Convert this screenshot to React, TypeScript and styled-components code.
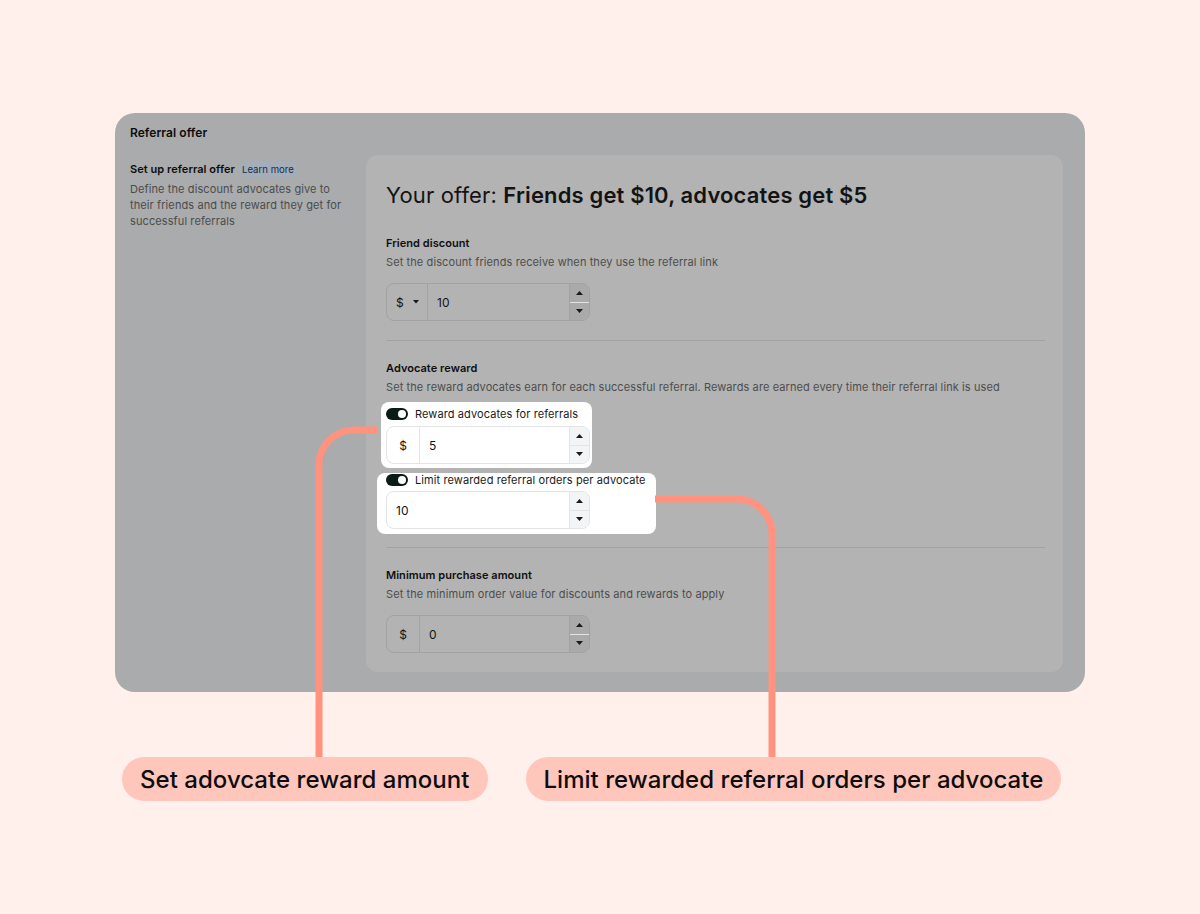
import React from "react"
import styled, { createGlobalStyle } from "styled-components"

const GlobalStyle = createGlobalStyle`
  html, body {
    margin: 0;
    padding: 0;
    background: #fff0ec;
    font-family: Inter, "Noto Sans", sans-serif;
    -webkit-font-smoothing: antialiased;
  }
`

type Tone = "dim" | "light"

const SpinArrow: React.FC<{ dir: "up" | "down" }> = ({ dir }) => (
  <svg width="7" height="4" viewBox="0 0 7 4">
    {dir === "up" ? <path d="M0 4 L3.5 0 L7 4 Z" fill="#1a1a1a" /> : <path d="M0 0 L3.5 4 L7 0 Z" fill="#1a1a1a" />}
  </svg>
)

const NumberInput: React.FC<{ tone: Tone; prefix?: string; caret?: boolean; value: string }> = ({
  tone,
  prefix,
  caret,
  value,
}) => (
  <InputGroup $tone={tone}>
    {prefix && (
      <Prefix $tone={tone} $wide={!!caret}>
        <span>{prefix}</span>
        {caret && (
          <svg width="6" height="4" viewBox="0 0 6 4">
            <path d="M0 0 L3 3.5 L6 0 Z" fill="#1a1a1a" />
          </svg>
        )}
      </Prefix>
    )}
    <Value>{value}</Value>
    <Spinner $tone={tone}>
      <SpinHalf $tone={tone}>
        <SpinArrow dir="up" />
      </SpinHalf>
      <SpinHalf $tone={tone}>
        <SpinArrow dir="down" />
      </SpinHalf>
    </Spinner>
  </InputGroup>
)

export default function App() {
  return (
    <Page>
      <GlobalStyle />

      {/* Settings panel (dimmed) */}
      <Panel>
        <PanelTitle>{"Referral offer"}</PanelTitle>
        <PanelBody>
          <Aside>
            <AsideTitleRow>
              <AsideTitle>{"Set up referral offer"}</AsideTitle>
              <Badge>{"Learn more"}</Badge>
            </AsideTitleRow>
            <AsideText>
              {"Define the discount advocates give to their friends and the reward they get for successful referrals"}
            </AsideText>
          </Aside>

          <Card>
            <Heading>
              {"Your offer: "}
              <strong>{"Friends get $10, advocates get $5"}</strong>
            </Heading>

            <Label>{"Friend discount"}</Label>
            <Help>{"Set the discount friends receive when they use the referral link"}</Help>
            <InputSlot>
              <NumberInput tone="dim" prefix="$" caret value="10" />
            </InputSlot>

            <Divider />

            <Label>{"Advocate reward"}</Label>
            <Help>{"Set the reward advocates earn for each successful referral. Rewards are earned every time their referral link is used"}</Help>

            <Highlight $variant="first">
              <ToggleRow>
                <Toggle />
                <ToggleLabel>{"Reward advocates for referrals"}</ToggleLabel>
              </ToggleRow>
              <NumberInput tone="light" prefix="$" value="5" />
            </Highlight>

            <Highlight $variant="second">
              <ToggleRow>
                <Toggle />
                <ToggleLabel>{"Limit rewarded referral orders per advocate"}</ToggleLabel>
              </ToggleRow>
              <NumberInput tone="light" value="10" />
            </Highlight>

            <Divider $tight />

            <Label>{"Minimum purchase amount"}</Label>
            <Help>{"Set the minimum order value for discounts and rewards to apply"}</Help>
            <InputSlot>
              <NumberInput tone="dim" prefix="$" value="0" />
            </InputSlot>
          </Card>
        </PanelBody>
      </Panel>

      {/* Connector lines */}
      <Connectors width="1200" height="914" viewBox="0 0 1200 914">
        <path d="M378 430 H354 A35 35 0 0 0 319 465 V760" />
        <path d="M655 499 H737 A35 35 0 0 1 772 534 V760" />
      </Connectors>

      {/* Callouts */}
      <Callouts>
        <Pill>{"Set adovcate reward amount"}</Pill>
        <Pill>{"Limit rewarded referral orders per advocate"}</Pill>
      </Callouts>
    </Page>
  )
}

/**
 * Styled components
 */

const Page = styled("div")`
  position: relative;
  width: 1200px;
  height: 914px;
  padding-top: 113px;
  box-sizing: border-box;
  overflow: hidden;
`

const Panel = styled("section")`
  margin: 0 115px;
  padding: 12px 22px 20px 15px;
  background: #aaabac;
  border-radius: 20px;
`

const PanelTitle = styled("div")`
  font-size: 12px;
  line-height: 16px;
  font-weight: 600;
  color: #0d0d0d;
  letter-spacing: 0.05px;
`

const PanelBody = styled("div")`
  display: grid;
  grid-template-columns: 236px 1fr;
  margin-top: 14px;
`

const Aside = styled("div")`
  padding-top: 6px;
  width: 222px;
`

const AsideTitleRow = styled("div")`
  display: flex;
  align-items: center;
  gap: 4px;
`

const AsideTitle = styled("span")`
  font-size: 11px;
  line-height: 16px;
  font-weight: 600;
  color: #0d0d0d;
  letter-spacing: 0.05px;
`

const Badge = styled("span")`
  display: inline-flex;
  align-items: center;
  height: 16px;
  padding: 0 3px;
  border-radius: 6px;
  background: #a4aeba;
  color: #1c2a44;
  font-size: 9.6px;
`

const AsideText = styled("p")`
  margin: 4px 0 0;
  font-size: 11px;
  line-height: 16px;
  color: #4b4c4d;
  letter-spacing: 0.1px;
`

const Card = styled("div")`
  display: flex;
  flex-direction: column;
  align-items: flex-start;
  padding: 26px 18px 19px 20px;
  background: #b3b3b3;
  border-radius: 12px;
`

const Heading = styled("h1")`
  margin: 0 0 26px;
  font-size: 22px;
  line-height: 28px;
  font-weight: 400;
  color: #131313;
  letter-spacing: 0.15px;

  strong {
    font-weight: 600;
  }
`

const Label = styled("div")`
  font-size: 11px;
  line-height: 16px;
  font-weight: 600;
  color: #0f0f0f;
  letter-spacing: 0.05px;
`

const Help = styled("div")`
  margin-top: 3px;
  font-size: 11px;
  line-height: 16px;
  color: #4d4d4d;
  letter-spacing: 0.1px;
`

const InputSlot = styled("div")`
  margin-top: 13px;
`

const Divider = styled("hr")<{ $tight?: boolean }>`
  align-self: stretch;
  margin: ${(p) => (p.$tight ? "13px 0 19px" : "19px 0 19px")};
  border: 0;
  border-top: 1px solid #a3a3a3;
`

const Highlight = styled("div")<{ $variant: "first" | "second" }>`
  display: flex;
  flex-direction: column;
  background: #ffffff;
  border-radius: 8px;
  ${(p) =>
    p.$variant === "first"
      ? `
    margin: 7px 0 0 -5px;
    padding: 5px 2px 4px 5px;
    gap: 5px;
  `
      : `
    margin: 5px 0 0 -9px;
    padding: 0 10px 5px 9px;
    gap: 4px;
  `}
`

const ToggleRow = styled("div")`
  display: flex;
  align-items: center;
  gap: 7px;
  height: 14px;
`

const Toggle = styled("span")`
  position: relative;
  width: 22px;
  height: 12px;
  border-radius: 6px;
  background: #0b1c17;
  flex-shrink: 0;

  &::after {
    content: "";
    position: absolute;
    top: 2px;
    right: 2px;
    width: 8px;
    height: 8px;
    border-radius: 50%;
    background: #ffffff;
  }
`

const ToggleLabel = styled("span")`
  font-size: 11px;
  line-height: 14px;
  color: #1a1a1a;
  letter-spacing: 0.1px;
`

const InputGroup = styled("div")<{ $tone: Tone }>`
  display: flex;
  width: 204px;
  height: 38px;
  box-sizing: border-box;
  border: 1px solid ${(p) => (p.$tone === "dim" ? "#a2a2a2" : "#e2e4e6")};
  border-radius: 8px;
  overflow: hidden;
  font-size: 12px;
  color: #141414;
`

const Prefix = styled("div")<{ $tone: Tone; $wide: boolean }>`
  display: flex;
  align-items: center;
  justify-content: ${(p) => (p.$wide ? "space-between" : "center")};
  width: ${(p) => (p.$wide ? "41px" : "33px")};
  padding: ${(p) => (p.$wide ? "0 8px 0 9px" : "0")};
  box-sizing: border-box;
  border-right: 1px solid ${(p) => (p.$tone === "dim" ? "#a2a2a2" : "#e2e4e6")};
`

const Value = styled("div")`
  flex: 1;
  display: flex;
  align-items: center;
  padding-left: 9px;
`

const Spinner = styled("div")<{ $tone: Tone }>`
  display: flex;
  flex-direction: column;
  width: 19px;
  border-left: 1px solid ${(p) => (p.$tone === "dim" ? "#a2a2a2" : "#e2e4e6")};
  background: ${(p) => (p.$tone === "dim" ? "#aaaaaa" : "#f3f4f5")};
`

const SpinHalf = styled("div")<{ $tone: Tone }>`
  flex: 1;
  display: flex;
  align-items: center;
  justify-content: center;

  & + & {
    border-top: 1px solid ${(p) => (p.$tone === "dim" ? "#a2a2a2" : "#e2e4e6")};
  }
`

const Connectors = styled("svg")`
  position: absolute;
  top: 0;
  left: 0;
  pointer-events: none;

  path {
    fill: none;
    stroke: #ff937f;
    stroke-width: 7;
  }
`

const Callouts = styled("div")`
  position: relative;
  z-index: 1;
  display: flex;
  gap: 38px;
  margin-top: 65px;
  padding-left: 122px;
`

const Pill = styled("div")`
  display: flex;
  align-items: center;
  height: 44px;
  padding: 0 18px;
  border-radius: 22px;
  background: #ffc6bc;
  color: #0d0d0d;
  font-size: 24px;
  font-weight: 500;
  letter-spacing: 0.03px;
`
